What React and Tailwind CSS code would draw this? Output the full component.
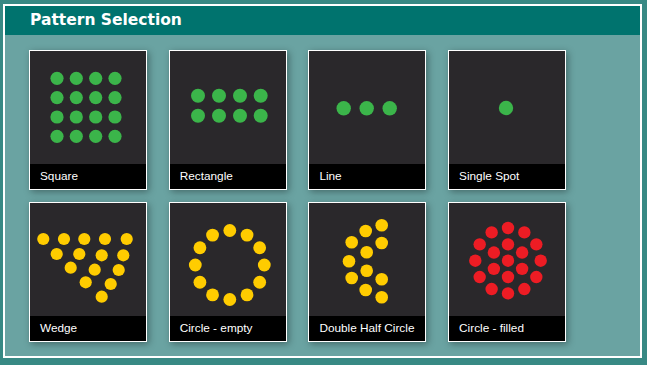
import React from "react";

const G = "#3bb54a";
const Y = "#ffcc00";
const R = "#ed1c24";

function ring(cx, cy, rad, n, offsetDeg = 0) {
  const pts = [];
  for (let i = 0; i < n; i++) {
    const a = ((i * 360) / n + offsetDeg) * (Math.PI / 180);
    pts.push([cx + rad * Math.sin(a), cy - rad * Math.cos(a)]);
  }
  return pts;
}

const square = [];
[27, 46.3, 65.7, 85].forEach((y) => [27, 46.3, 65.7, 85].forEach((x) => square.push([x, y + 0.3])));
const rect = [];
[44.7, 64.7].forEach((y) => [28, 49, 70, 90.7].forEach((x) => rect.push([x, y])));
const line = [[34.7, 57.3], [57.7, 57.3], [80.7, 57.3]];
const single = [[57, 57]];
const wedge = [
  [13.3, 36], [34, 36], [54.3, 36], [75, 36], [96.7, 36],
  [26.7, 51], [49.3, 51], [71.7, 52.3], [93.3, 52.3],
  [40.7, 64.7], [64.7, 66.7], [88.7, 67],
  [55.7, 79.3], [80.7, 81],
  [71.7, 93.7],
];
const circleEmpty = ring(59.8, 62, 34.5, 12);
const doubleHalf = [
  [72.7, 22.3], [56.7, 28], [42.7, 39.3], [72.7, 40], [57.7, 49.3], [40, 58.3],
  [57.7, 67.7], [42.7, 75], [72.7, 76.3], [56.7, 87], [72.7, 94.3],
];
const circleFilled = [[59, 57.7], ...ring(59, 57.7, 16.3, 6), ...ring(59, 57.7, 32.7, 12)];

const cards = [
  { label: "Square", dots: square, color: G, r: 6.6 },
  { label: "Rectangle", dots: rect, color: G, r: 7 },
  { label: "Line", dots: line, color: G, r: 7.2 },
  { label: "Single Spot", dots: single, color: G, r: 7.2 },
  { label: "Wedge", dots: wedge, color: Y, r: 6.1 },
  { label: "Circle - empty", dots: circleEmpty, color: Y, r: 6.4 },
  { label: "Double Half Circle", dots: doubleHalf, color: Y, r: 6.3 },
  { label: "Circle - filled", dots: circleFilled, color: R, r: 6.2 },
];

function Card({ label, dots, color, r }) {
  return (
    <div className="w-[118px] h-[140px] border border-white bg-[#2a282b] flex flex-col shadow-[2px_2px_7px_rgba(0,0,0,0.35)]">
      <svg width="116" height="113" viewBox="0 0 116 113" className="block">
        {dots.map(([x, y], i) => (
          <circle key={i} cx={x} cy={y} r={r} fill={color} />
        ))}
      </svg>
      <div className="h-[25px] bg-black flex items-center pl-[10px] text-white text-[11.8px] leading-none font-['Liberation_Sans',Arial,sans-serif]">
        {label}
      </div>
    </div>
  );
}

export default function App() {
  return (
    <div className="w-[647px] h-[365px] bg-[#388984] pt-[4px] pl-[3px] overflow-hidden">
      <div className="w-[639px] h-[354px] border-2 border-white bg-[#6aa3a2] flex flex-col">
        <div className="h-[29px] bg-[#00736e] flex items-center pl-[25px] shrink-0">
          <span className="text-white text-[15.5px] font-bold leading-none font-['DejaVu_Sans',sans-serif] pt-[1px]">
            Pattern Selection
          </span>
        </div>
        <div className="pl-[24px] pt-[15px] grid grid-cols-[118px_118px_118px_118px] gap-x-[21.7px] gap-y-[12px]">
          {cards.map((c) => (
            <Card key={c.label} {...c} />
          ))}
        </div>
      </div>
    </div>
  );
}
